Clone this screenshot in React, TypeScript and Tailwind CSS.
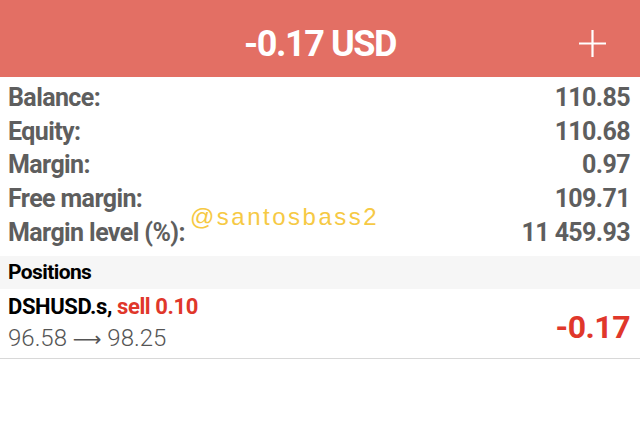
// Écran de compte de trading — en-tête de profit, résumé du compte et positions ouvertes

const lignesCompte = [
  { libelle: 'Balance:', valeur: '110.85' },
  { libelle: 'Equity:', valeur: '110.68' },
  { libelle: 'Margin:', valeur: '0.97' },
  { libelle: 'Free margin:', valeur: '109.71' },
  { libelle: 'Margin level (%):', valeur: '11 459.93' },
];

export default function App() {
  return (
    <div className="w-[640px] h-[435px] bg-white overflow-hidden font-['Roboto',sans-serif]">
      {/* En-tête */}
      <div className="relative h-[77px] bg-[#e36f64] flex justify-center pt-[26px]">
        <span className="text-white font-bold text-[36px] leading-none tracking-[-1.4px]">-0.17 USD</span>
        <svg
          className="absolute right-[33px] top-[29px]"
          width="29"
          height="29"
          viewBox="0 0 29 29"
          aria-hidden="true"
        >
          <path d="M14.5 1v27M1 14.5h27" stroke="white" strokeWidth="2.2" />
        </svg>
      </div>

      {/* Résumé du compte */}
      <div className="relative pl-[8px] pr-[10px] pt-[4px] pb-[7px]">
        {lignesCompte.map((l) => (
          <div
            key={l.libelle}
            className="flex justify-between items-center h-[33.7px] text-[25px] font-bold text-[#5e5e5e] tracking-[-0.6px]"
          >
            <span>{l.libelle}</span>
            <span>{l.valeur}</span>
          </div>
        ))}
        <span className="absolute left-[190px] top-[125px] text-[24px] leading-[30px] text-[#f6c944] font-['Liberation_Sans',Arial,sans-serif] tracking-[2.5px]">
          @santosbass2
        </span>
      </div>

      {/* Positions */}
      <div className="bg-[#f6f6f6] h-[33px] flex items-center pl-[8px]">
        <span className="text-[21px] font-bold text-black tracking-[-0.6px]">Positions</span>
      </div>
      <div className="flex items-start justify-between pl-[8px] pr-[10px] h-[70px] border-b border-[#d8d8d8]">
        <div className="flex flex-col pt-[3px]">
          <span className="text-[22px] font-bold text-black leading-[30px] tracking-[-0.4px]">
            DSHUSD.s, <span className="text-[#e0372b]">sell 0.10</span>
          </span>
          <span className="text-[24px] text-[#555] leading-[32px] font-light">
            96.58 <span className="font-['DejaVu_Sans',sans-serif] font-normal text-[20px]">⟶</span> 98.25
          </span>
        </div>
        <span className="text-[32px] font-bold text-[#e0372b] leading-none mt-[22px] tracking-[-0.5px]">-0.17</span>
      </div>
    </div>
  );
}
